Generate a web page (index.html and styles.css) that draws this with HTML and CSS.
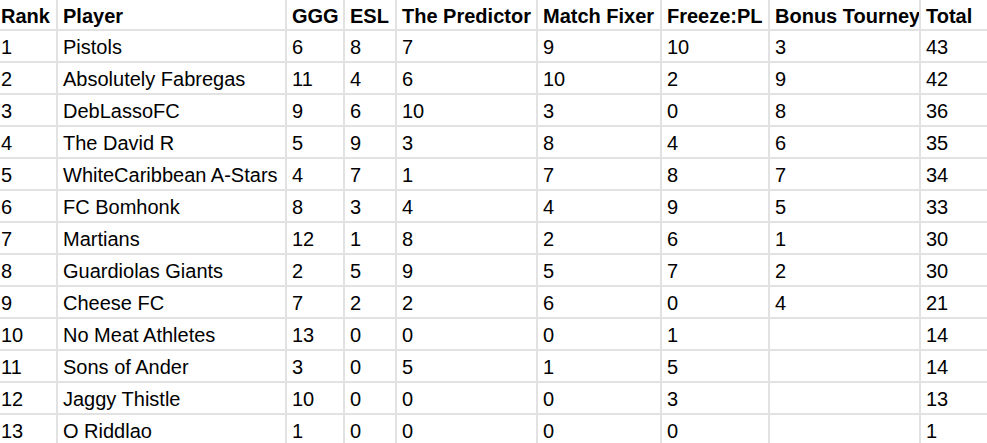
FILE: index.html
```html
<!DOCTYPE html>
<html lang="en">
<head>
<meta charset="utf-8">
<title>Standings</title>
<link rel="stylesheet" href="styles.css">
</head>
<body>
<div class="sheet">
  <div class="cell head first">Rank</div><div class="cell head">Player</div><div class="cell head">GGG</div><div class="cell head">ESL</div><div class="cell head">The Predictor</div><div class="cell head">Match Fixer</div><div class="cell head">Freeze:PL</div><div class="cell head">Bonus Tourney</div><div class="cell head">Total</div>

  <div class="cell first">1</div><div class="cell">Pistols</div><div class="cell">6</div><div class="cell">8</div><div class="cell">7</div><div class="cell">9</div><div class="cell">10</div><div class="cell">3</div><div class="cell">43</div>
  <div class="cell first">2</div><div class="cell">Absolutely Fabregas</div><div class="cell">11</div><div class="cell">4</div><div class="cell">6</div><div class="cell">10</div><div class="cell">2</div><div class="cell">9</div><div class="cell">42</div>
  <div class="cell first">3</div><div class="cell">DebLassoFC</div><div class="cell">9</div><div class="cell">6</div><div class="cell">10</div><div class="cell">3</div><div class="cell">0</div><div class="cell">8</div><div class="cell">36</div>
  <div class="cell first">4</div><div class="cell">The David R</div><div class="cell">5</div><div class="cell">9</div><div class="cell">3</div><div class="cell">8</div><div class="cell">4</div><div class="cell">6</div><div class="cell">35</div>
  <div class="cell first">5</div><div class="cell">WhiteCaribbean A-Stars</div><div class="cell">4</div><div class="cell">7</div><div class="cell">1</div><div class="cell">7</div><div class="cell">8</div><div class="cell">7</div><div class="cell">34</div>
  <div class="cell first">6</div><div class="cell">FC Bomhonk</div><div class="cell">8</div><div class="cell">3</div><div class="cell">4</div><div class="cell">4</div><div class="cell">9</div><div class="cell">5</div><div class="cell">33</div>
  <div class="cell first">7</div><div class="cell">Martians</div><div class="cell">12</div><div class="cell">1</div><div class="cell">8</div><div class="cell">2</div><div class="cell">6</div><div class="cell">1</div><div class="cell">30</div>
  <div class="cell first">8</div><div class="cell">Guardiolas Giants</div><div class="cell">2</div><div class="cell">5</div><div class="cell">9</div><div class="cell">5</div><div class="cell">7</div><div class="cell">2</div><div class="cell">30</div>
  <div class="cell first">9</div><div class="cell">Cheese FC</div><div class="cell">7</div><div class="cell">2</div><div class="cell">2</div><div class="cell">6</div><div class="cell">0</div><div class="cell">4</div><div class="cell">21</div>
  <div class="cell first">10</div><div class="cell">No Meat Athletes</div><div class="cell">13</div><div class="cell">0</div><div class="cell">0</div><div class="cell">0</div><div class="cell">1</div><div class="cell"></div><div class="cell">14</div>
  <div class="cell first">11</div><div class="cell">Sons of Ander</div><div class="cell">3</div><div class="cell">0</div><div class="cell">5</div><div class="cell">1</div><div class="cell">5</div><div class="cell"></div><div class="cell">14</div>
  <div class="cell first">12</div><div class="cell">Jaggy Thistle</div><div class="cell">10</div><div class="cell">0</div><div class="cell">0</div><div class="cell">0</div><div class="cell">3</div><div class="cell"></div><div class="cell">13</div>
  <div class="cell first">13</div><div class="cell">O Riddlao</div><div class="cell">1</div><div class="cell">0</div><div class="cell">0</div><div class="cell">0</div><div class="cell">0</div><div class="cell"></div><div class="cell">1</div>
</div>
</body>
</html>
```

FILE: styles.css
```css
html, body {
  margin: 0;
  padding: 0;
  overflow: hidden;
  background: #ffffff;
}

.sheet {
  display: grid;
  grid-template-columns: 56px 227px 56px 50px 139px 122px 106px 149px 1fr;
  grid-template-rows: 29px repeat(13, 30px);
  gap: 2px;
  width: 987px;
  background: #e2e2e2;
  font-family: "Liberation Sans", Arial, sans-serif;
  font-size: 20px;
  color: #000000;
}

.cell {
  display: flex;
  align-items: flex-end;
  background: #ffffff;
  padding: 0 5px 3px 5px;
  line-height: 22px;
  white-space: nowrap;
  overflow: hidden;
}

.cell.first {
  padding-left: 1px;
}

.cell.head {
  font-weight: bold;
  padding-bottom: 2px;
}
```
